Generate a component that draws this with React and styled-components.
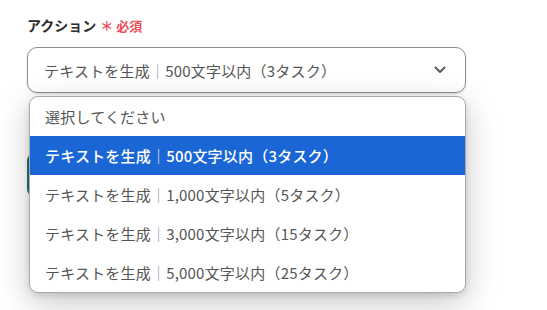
import React from 'react';
import styled, { createGlobalStyle } from 'styled-components';

const GlobalStyle = createGlobalStyle`
  html, body {
    margin: 0;
    padding: 0;
    background: #fff;
  }
  body {
    font-family: "Noto Sans CJK JP", "Noto Sans", sans-serif;
    color: #333;
  }
`;

const Page = styled.div`
  position: relative;
  width: 547px;
  height: 310px;
  padding: 15px 0 0 27px;
  box-sizing: border-box;
  overflow: hidden;
`;

const Label = styled.div`
  display: flex;
  align-items: center;
  gap: 4px;
  height: 20px;
  font-size: 14px;
  font-weight: 700;
  color: #2b2b2b;
`;

const Required = styled.span`
  color: #ec4f5b;
  font-size: 13px;
  font-weight: 700;
  display: flex;
  align-items: center;
  gap: 3px;
`;

const Select = styled.div`
  margin-top: 12px;
  width: 439px;
  height: 46px;
  box-sizing: border-box;
  border: 1px solid #8e8e8e;
  border-radius: 10px;
  box-shadow: 0 1px 2px rgba(0, 0, 0, 0.15);
  display: flex;
  align-items: center;
  justify-content: space-between;
  padding: 0 19px 0 16px;
  font-size: 15px;
  letter-spacing: 0.2px;
  color: #555;
`;

const Bar = styled.span`
  color: #9a98a8;
`;

const Submit = styled.div`
  margin-top: 60px;
  width: 120px;
  height: 44px;
  border-radius: 8px;
  background: #25707a;
`;

const Menu = styled.ul`
  position: absolute;
  left: 29px;
  top: 96px;
  width: 437px;
  margin: 0;
  padding: 0;
  list-style: none;
  box-sizing: border-box;
  background: #fff;
  border: 1px solid #a8a8a8;
  border-radius: 9px;
  overflow: hidden;
  box-shadow: 0 10px 32px rgba(0, 0, 0, 0.22), 0 2px 6px rgba(0, 0, 0, 0.12);
`;

const Option = styled.li`
  height: 39px;
  display: flex;
  align-items: center;
  padding-left: 15px;
  font-size: 15px;
  letter-spacing: 0.2px;
  color: ${({ $active }) => ($active ? '#fff' : '#555')};
  background: ${({ $active }) => ($active ? '#1a66d4' : 'transparent')};
  font-weight: ${({ $active }) => ($active ? 500 : 400)};

  ${Bar} {
    color: ${({ $active }) => ($active ? '#dfe8f8' : '#9a98a8')};
  }
`;

const options = [
  null,
  ['500', '3'],
  ['1,000', '5'],
  ['3,000', '15'],
  ['5,000', '25'],
];

const Text = ({ chars, tasks }) => (
  <span>
    テキストを生成<Bar>｜</Bar>
    {chars}文字以内（{tasks}タスク）
  </span>
);

const Chevron = () => (
  <svg width='12' height='8' viewBox='0 0 12 8' fill='none'>
    <path d='M1.5 1.5 L6 6 L10.5 1.5' stroke='#555' strokeWidth='1.8' strokeLinecap='round' strokeLinejoin='round' />
  </svg>
);

export default function App() {
  return (
    <Page>
      <GlobalStyle />
      <Label>
        アクション
        <Required>
          <span>＊</span>必須
        </Required>
      </Label>
      <Select>
        <Text chars='500' tasks='3' />
        <Chevron />
      </Select>
      <Submit />
      <Menu>
        {options.map((o, i) => (
          <Option key={i} $active={i === 1}>
            {o ? <Text chars={o[0]} tasks={o[1]} /> : '選択してください'}
          </Option>
        ))}
      </Menu>
    </Page>
  );
}
